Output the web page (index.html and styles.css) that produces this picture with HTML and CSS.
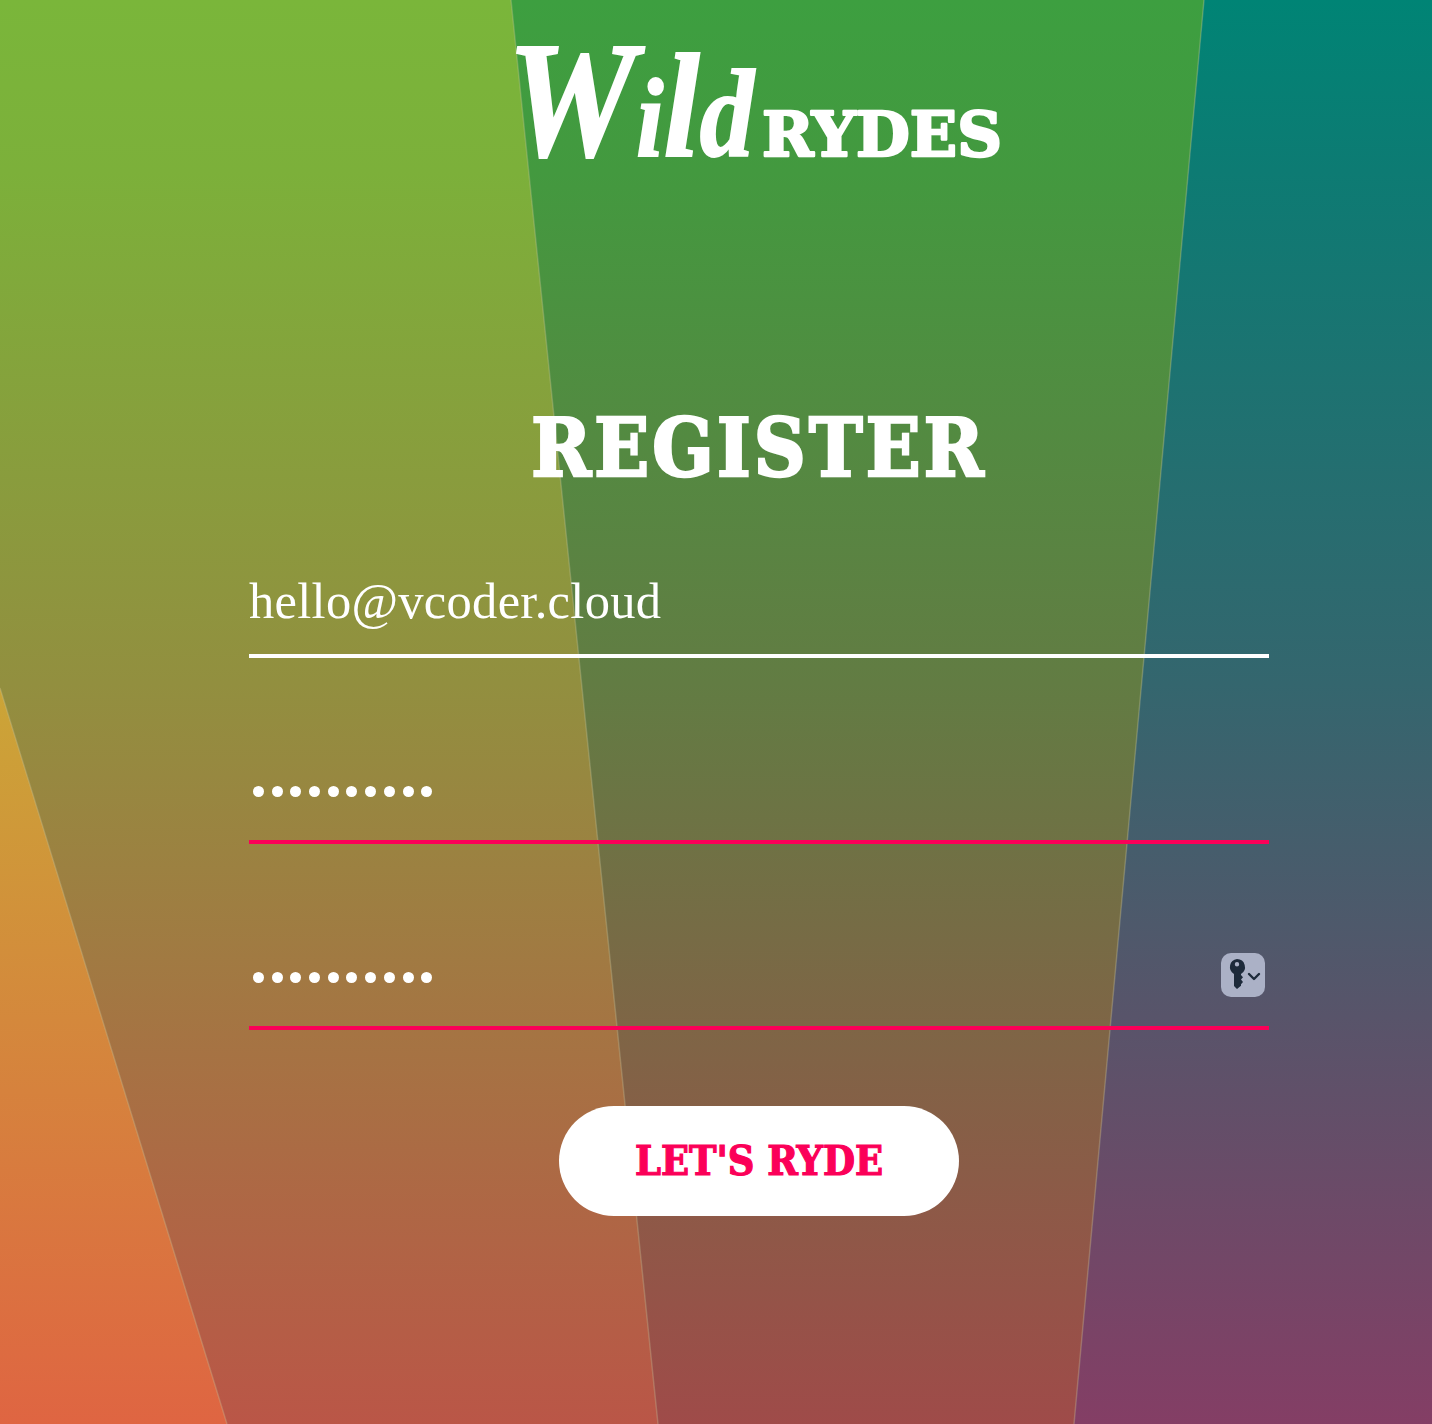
FILE: index.html
```html
<!DOCTYPE html>
<html lang="en">
<head>
<meta charset="utf-8">
<title>Wild Rydes - Register</title>
<link rel="stylesheet" href="styles.css">
</head>
<body>
<svg class="backdrop" viewBox="0 0 1432 1424" aria-hidden="true">
  <defs>
    <linearGradient id="gold" gradientUnits="userSpaceOnUse" x1="0" y1="688" x2="0" y2="1424"><stop offset="0" stop-color="#cba537"/><stop offset="1" stop-color="#df6542"/></linearGradient>
    <linearGradient id="lime" x1="0" y1="0" x2="0" y2="1"><stop offset="0" stop-color="#7ab63a"/><stop offset=".12" stop-color="#7cb03a"/><stop offset=".48" stop-color="#928f3f"/><stop offset="1" stop-color="#ba5647"/></linearGradient>
    <linearGradient id="green" gradientUnits="userSpaceOnUse" x1="0" y1="0" x2="0" y2="1424"><stop offset="0" stop-color="#3d9f40"/><stop offset=".12" stop-color="#43993f"/><stop offset=".48" stop-color="#627c43"/><stop offset="1" stop-color="#9f4b49"/></linearGradient>
    <linearGradient id="teal" gradientUnits="userSpaceOnUse" x1="0" y1="0" x2="0" y2="1424"><stop offset="0" stop-color="#008475"/><stop offset=".12" stop-color="#0d7b73"/><stop offset=".48" stop-color="#34666e"/><stop offset="1" stop-color="#843e65"/></linearGradient>
  </defs>
  <rect width="1432" height="1424" fill="url(#lime)"/>
  <path d="M0 688 227 1424H0Z" fill="url(#gold)"/>
  <path d="M511 0H1204L1074 1424H658Z" fill="url(#green)"/>
  <path d="M1204 0H1432V1424H1074Z" fill="url(#teal)"/>
  <path class="seam" d="M0 688 227 1424M511 0 658 1424M1204 0 1074 1424"/>
</svg>
<main class="page">
  <header class="brand">
    <svg class="logo" viewBox="0 0 486 112" role="img" aria-label="Wild Rydes">
      <text class="logo-wild" x="-9" y="110" textLength="247" lengthAdjust="spacingAndGlyphs"><tspan class="logo-initial">W</tspan><tspan class="logo-i">i</tspan>l<tspan class="logo-d">d</tspan></text>
      <text class="logo-rydes" x="246" y="110" textLength="240" lengthAdjust="spacingAndGlyphs">RYDES</text>
    </svg>
  </header>
  <h1 class="title">REGISTER</h1>
  <form class="form">
    <div class="field field-valid"><span class="email">hello@vcoder.cloud</span></div>
    <div class="field"><span class="dots"><i></i><i></i><i></i><i></i><i></i><i></i><i></i><i></i><i></i><i></i></span></div>
    <div class="field">
      <span class="dots"><i></i><i></i><i></i><i></i><i></i><i></i><i></i><i></i><i></i><i></i></span>
      <svg class="key" viewBox="0 0 44 44" aria-hidden="true">
        <rect width="44" height="44" rx="10" fill="#abb1c6"/>
        <path fill="#1d2a3a" fill-rule="evenodd" d="M16 6a8 8 0 0 1 4 14.900V22l2 2.300-2 2.300 2 2.400-2 2.300v1.500L16 36l-3-3V20.900A8 8 0 0 1 16 6Zm0 3a2.200 2.200 0 1 0 0 4.400 2.200 2.200 0 0 0 0-4.400Z"/>
        <path d="m28 21 5 5 5-5" fill="none" stroke="#1d2a3a" stroke-width="2.400" stroke-linecap="round" stroke-linejoin="round"/>
      </svg>
    </div>
    <button class="submit" type="button">LET'S RYDE</button>
  </form>
</main>
</body>
</html>
```

FILE: styles.css
```css
* { box-sizing: border-box; }
body { margin: 0; background: #7ab63a; }
.backdrop { position: absolute; inset: 0; width: 100%; height: 1424px; z-index: -1; }
.seam { fill: none; stroke: #c8c8a0; stroke-opacity: .3; stroke-width: 1.5; }
.page { width: 1020px; height: 1424px; margin-left: 249px; padding-top: 46px; color: #fff; }
.brand { display: flex; justify-content: center; }
.logo { width: 486px; height: 112px; fill: #fff; overflow: visible; }
.logo-wild { font: italic bold 149px "Liberation Serif", serif; stroke: #fff; stroke-width: 2; }
.logo-initial { font-size: 166px; }
.logo-i { font-size: 112px; }
.logo-d { font-size: 124px; }
.logo-rydes { font: bold 62px "DejaVu Serif", serif; stroke: #fff; stroke-width: 2.5; stroke-linejoin: round; }
.title { margin: 240px 0 0; height: 100px; font: bold 80px/100px "DejaVu Serif Condensed", "DejaVu Serif", serif; font-stretch: condensed; letter-spacing: 3.2px; text-align: center; white-space: nowrap; -webkit-text-stroke: 2.5px #fff; }
.form { display: flex; flex-direction: column; align-items: center; padding-top: 60px; }
.field { display: flex; align-items: center; justify-content: space-between; width: 100%; height: 100px; margin-bottom: 86px; padding: 0 4px 2px; border-bottom: 4px solid #fb0058; }
.field-valid { padding: 0 0 10px; border-color: #fff; }
.email { font: 50.5px/60px "Liberation Serif", serif; letter-spacing: .3px; }
.dots { display: flex; gap: 7.7px; }
.dots i { width: 11px; height: 11px; border-radius: 50%; background: #fff; }
.key { width: 44px; height: 44px; margin-bottom: 4px; }
.submit { width: 400px; height: 110px; margin-top: -10px; padding: 0; border: 0; border-radius: 55px; background: #fff; color: #fb0058; font: bold 41px/110px "DejaVu Serif Condensed", "DejaVu Serif", serif; font-stretch: condensed; -webkit-text-stroke: 1.2px #fb0058; }
```
